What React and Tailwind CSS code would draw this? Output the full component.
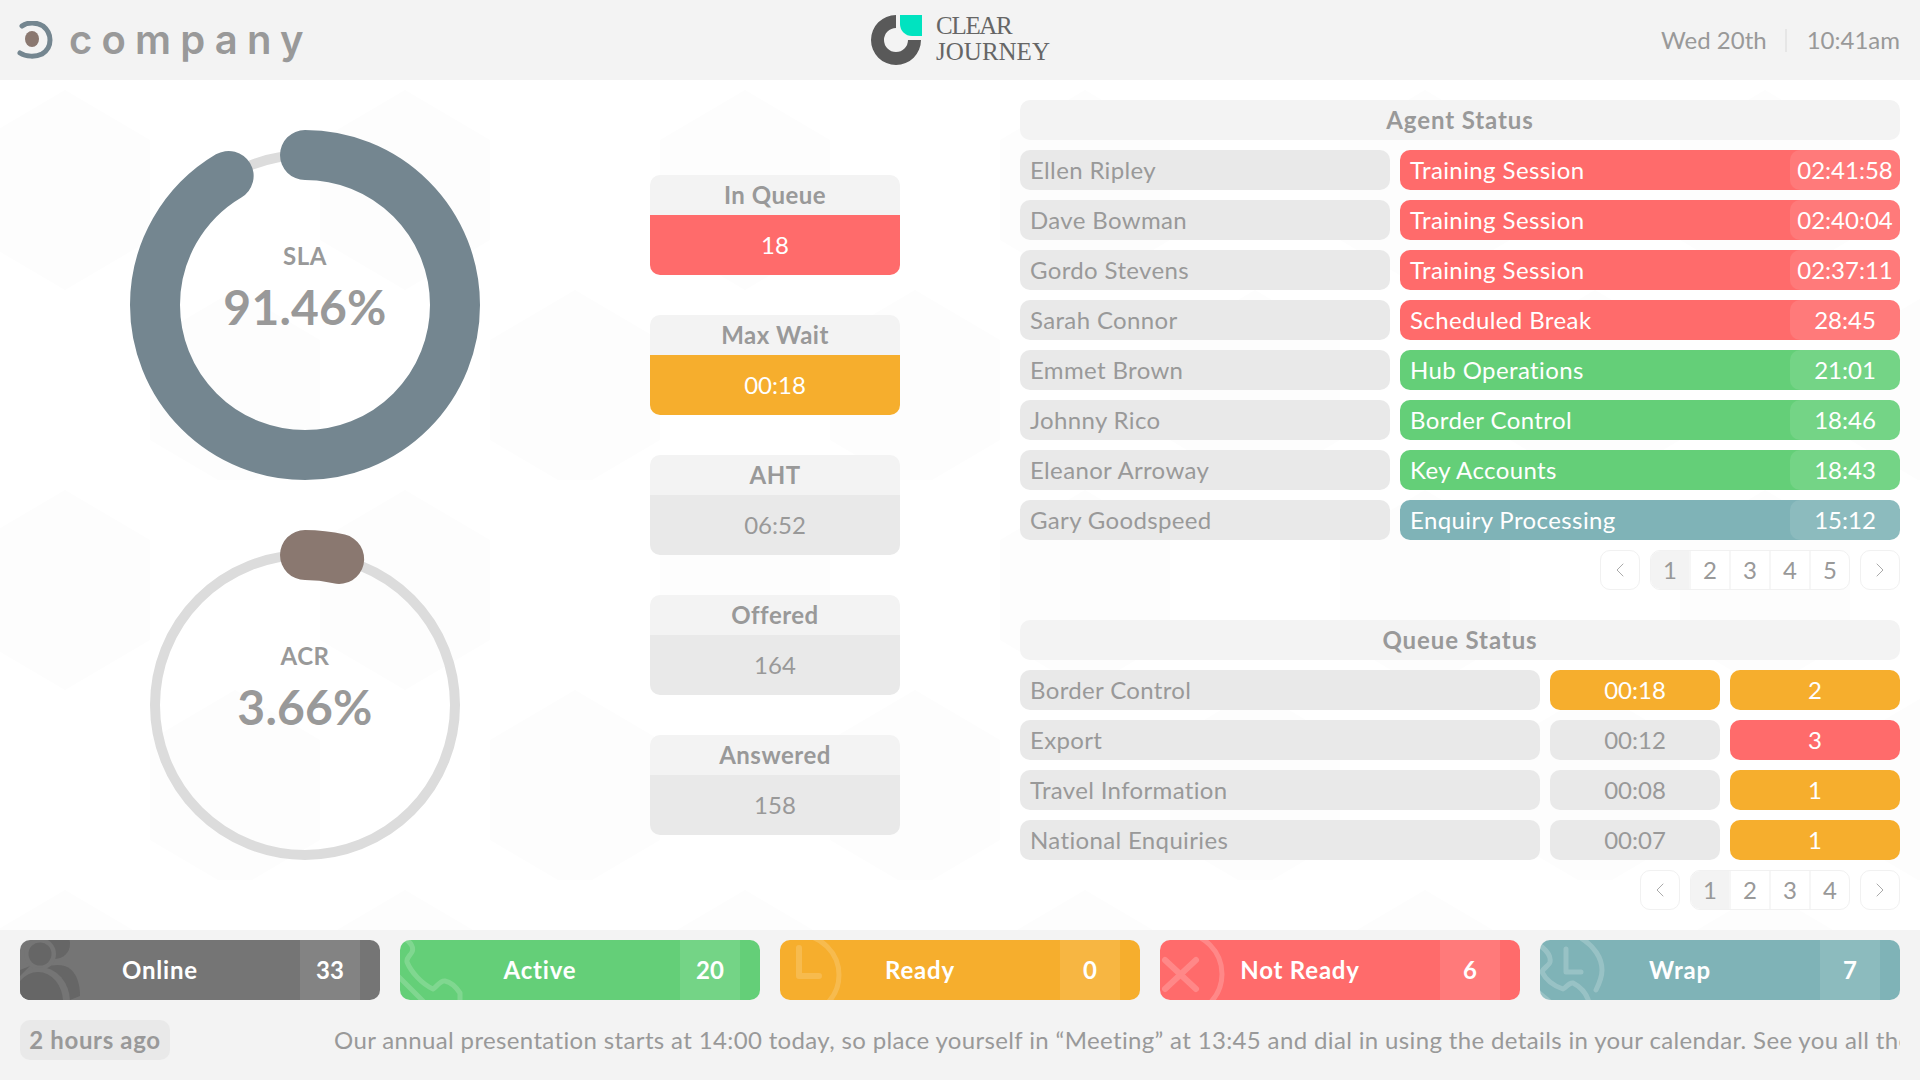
import React from "react";
import { ChevronLeft, ChevronRight } from "lucide-react";

const FONT = "font-['Lato','Noto_Sans',sans-serif]";

const agents = [
  ["Ellen Ripley", "Training Session", "02:41:58", "red"],
  ["Dave Bowman", "Training Session", "02:40:04", "red"],
  ["Gordo Stevens", "Training Session", "02:37:11", "red"],
  ["Sarah Connor", "Scheduled Break", "28:45", "red"],
  ["Emmet Brown", "Hub Operations", "21:01", "green"],
  ["Johnny Rico", "Border Control", "18:46", "green"],
  ["Eleanor Arroway", "Key Accounts", "18:43", "green"],
  ["Gary Goodspeed", "Enquiry Processing", "15:12", "teal"],
];
const bgs = {
  red: "bg-[#ff6b6b] text-white",
  green: "bg-[#64cf78] text-white",
  teal: "bg-[#7fb3b7] text-white",
  amber: "bg-[#f6ae2d] text-white",
  gray: "bg-[#e9e9e9] text-[#999999]",
};
const queues = [
  ["Border Control", "00:18", "amber", "2", "amber"],
  ["Export", "00:12", "gray", "3", "red"],
  ["Travel Information", "00:08", "gray", "1", "amber"],
  ["National Enquiries", "00:07", "gray", "1", "amber"],
];
const kpis = [
  ["In Queue", "18", "red"],
  ["Max Wait", "00:18", "amber"],
  ["AHT", "06:52", "gray"],
  ["Offered", "164", "gray"],
  ["Answered", "158", "gray"],
];

function Donut({ label, value, pct, color }) {
  const c = 2 * Math.PI * 150;
  return (
    <div className="relative w-[360px] h-[360px]">
      <svg width="360" height="360" viewBox="0 0 360 360" className="overflow-visible">
        <circle cx="180" cy="180" r="150" fill="none" stroke="#dcdcdc" strokeWidth="10" />
        <circle
          cx="180"
          cy="180"
          r="150"
          fill="none"
          stroke={color}
          strokeWidth="50"
          strokeLinecap="round"
          strokeDasharray={`${(c * pct) / 100} ${c}`}
          transform="rotate(-90 180 180)"
        />
      </svg>
      <div className="absolute inset-0 flex flex-col items-center justify-center pb-[32px] text-[#999999] font-bold">
        <div className="text-[24px] leading-[30px] mb-[6px] tracking-[0.5px]">{label}</div>
        <div className="text-[48px] leading-[60px] tracking-[0.2px]">{value}</div>
      </div>
    </div>
  );
}

function Pager({ pages }) {
  const box = "w-[40px] h-[40px] flex items-center justify-center";
  return (
    <div className="flex justify-end gap-[10px] text-[24px] text-[#999999]">
      <div className={`${box} border border-[#f1f1f1] rounded-[10px] bg-white`}>
        <ChevronLeft size={24} strokeWidth={1} color="#aaaaaa" />
      </div>
      <div className={`flex h-[40px] border border-[#f1f1f1] rounded-[10px] overflow-hidden bg-white ${pages === 5 ? "w-[200px]" : "w-[160px]"}`}>
        {Array.from({ length: pages }, (_, i) => (
          <div
            key={i}
            className={`flex-1 flex items-center justify-center border-r-2 border-[#f6f6f6] last:border-r-0 ${i === 0 ? "bg-[#f3f3f3]" : ""}`}
          >
            {i + 1}
          </div>
        ))}
      </div>
      <div className={`${box} border border-[#f1f1f1] rounded-[10px] bg-white`}>
        <ChevronRight size={24} strokeWidth={1} color="#aaaaaa" />
      </div>
    </div>
  );
}

const Head = ({ children }) => (
  <div className="h-[40px] rounded-[10px] bg-[#f3f3f3] flex items-center justify-center text-[24px] font-bold tracking-[0.9px] text-[#999999]">
    {children}
  </div>
);

const IconOnline = () => (
  <svg width="70" height="60" viewBox="0 0 70 60" className="absolute left-0 top-0">
    <circle cx="35" cy="4" r="15" fill="#666666" />
    <path d="M8 60 C8 36 20 25 38 25 C54 25 60 40 60 56 L55 58 L50 60 Z" fill="#666666" />
    <circle cx="20" cy="14" r="16" fill="#757575" />
    <circle cx="20" cy="14" r="11.5" fill="#666666" />
    <ellipse cx="20" cy="62" rx="30" ry="35" fill="#757575" />
    <ellipse cx="18" cy="62" rx="25" ry="30" fill="#666666" />
    <path d="M0 30 L10 26 L0 36 Z" fill="#666666" />
  </svg>
);
const IconActive = () => (
  <svg width="70" height="60" viewBox="0 0 70 60" fill="none" stroke="#ffffff" strokeOpacity="0.18" strokeWidth="5" strokeLinecap="round" strokeLinejoin="round" className="absolute left-0 top-0">
    <path d="M5 -1 C11 2 14 8 12 12 C10 16 6 18 7 22 C11 32 22 44 33 49 C37 47 40 40 45 41 C50 42 56 47 60 53 L60 62" />
    <path d="M-2 36 L24 62" />
  </svg>
);
const IconReady = () => (
  <svg width="70" height="60" viewBox="0 0 70 60" fill="none" stroke="#ffffff" strokeOpacity="0.16" strokeLinecap="round" strokeLinejoin="round" className="absolute left-0 top-0">
    <path d="M19 8 V36 H39" strokeWidth="6" />
    <circle cx="19" cy="35" r="40" strokeWidth="5" />
  </svg>
);
const IconNotReady = () => (
  <svg width="70" height="60" viewBox="0 0 70 60" fill="none" stroke="#ffffff" strokeOpacity="0.2" strokeLinecap="round" className="absolute left-0 top-0">
    <path d="M5 20 L36 49 M36 20 L5 49" strokeWidth="6" />
    <circle cx="21" cy="34" r="41" strokeWidth="5" />
  </svg>
);
const IconWrap = () => (
  <svg width="70" height="60" viewBox="0 0 70 60" fill="none" stroke="#ffffff" strokeOpacity="0.2" strokeLinecap="round" strokeLinejoin="round" className="absolute left-0 top-0">
    <path d="M26 9 V32 H41" strokeWidth="5" />
    <path d="M41 -2 C54 6 62 18 62 30 C62 38 59 44 56 50" strokeWidth="5" />
    <path d="M2 7 C8 12 11 17 10 22 C9 26 3 28 2 32 C6 40 14 46 23 49 C26 48 29 42 33 43 C39 46 46 52 49 62" strokeWidth="5" />
    <path d="M-2 52 L10 62" strokeWidth="5" />
  </svg>
);

const stats = [
  ["Online", "33", "bg-[#757575]", IconOnline],
  ["Active", "20", "bg-[#64cf78]", IconActive],
  ["Ready", "0", "bg-[#f6ae2d]", IconReady],
  ["Not Ready", "6", "bg-[#ff6b6b]", IconNotReady],
  ["Wrap", "7", "bg-[#7fb3b7]", IconWrap],
];

export default function App() {
  return (
    <div className={`${FONT} relative w-[1920px] h-[1080px] overflow-hidden flex flex-col bg-white text-[24px]`}>
      <svg className="absolute inset-0" width="1920" height="1080">
        <defs>
          <pattern id="hex" width="340" height="400" patternUnits="userSpaceOnUse" x="-20" y="80">
            <path d="M0 60 L85 10 L170 60 L170 160 L85 210 L0 160 Z" fill="#fdfdfd" />
            <path d="M170 260 L255 210 L340 260 L340 360 L255 410 L170 360 Z" fill="#fdfdfd" />
          </pattern>
        </defs>
        <rect width="1920" height="1080" fill="url(#hex)" />
      </svg>

      <header className="relative h-[80px] shrink-0 bg-[#f3f3f3] flex items-center justify-between">
        <div className="flex items-center pl-[17px] w-[500px]">
          <svg width="36" height="38" viewBox="0 0 36 38">
            <path d="M5 5 C10 1 20 1 26 5 C31 9 33 14 33 19 C33 25 30 30 25 33 C19 36 9 36 3 32" fill="none" stroke="#748690" strokeWidth="5" strokeLinecap="round" />
            <ellipse cx="15" cy="18" rx="7" ry="8" fill="#8a7870" />
          </svg>
          <span className="ml-[16px] font-['Inter',sans-serif] font-semibold text-[40px] leading-none tracking-[9.2px] text-[#999999]">company</span>
        </div>
        <div className="flex items-center gap-[14px]">
          <svg width="52" height="50" viewBox="0 0 52 50">
            <path d="M26 0 A25 25 0 1 0 51 25 H38 A12 12 0 1 1 26 13 Z" fill="#595959" />
            <path d="M30 0 H52 V21 H42 A12 12 0 0 1 30 9 Z" fill="#00e3c0" />
          </svg>
          <div className="font-['Liberation_Serif',serif] text-[#666666] text-[25px] leading-[26px] mt-[-2px]">
            <div className="tracking-[-1.3px]">CLEAR</div>
            <div className="tracking-[0px]">JOURNEY</div>
          </div>
        </div>
        <div className="w-[500px] flex justify-end items-center pr-[20px] text-[24px] text-[#999999]">
          <span>Wed 20th</span>
          <span className="w-[2px] h-[23px] bg-[#e6e6e6] ml-[18px] mr-[20px]" />
          <span>10:41am</span>
        </div>
      </header>

      <main className="relative flex-1 flex text-[#999999]">
        <section className="w-[610px] flex flex-col items-center pt-[45px] gap-[40px]">
          <Donut label="SLA" value="91.46%" pct={91.46} color="#748690" />
          <Donut label="ACR" value="3.66%" pct={3.66} color="#8a7870" />
        </section>

        <section className="ml-[40px] w-[250px] pt-[95px] flex flex-col gap-[40px]">
          {kpis.map(([t, v, c]) => (
            <div key={t} className="rounded-[10px] overflow-hidden text-center">
              <div className="h-[40px] bg-[#f3f3f3] flex items-center justify-center font-bold tracking-[0.5px]">{t}</div>
              <div className={`h-[60px] flex items-center justify-center ${bgs[c]}`}>{v}</div>
            </div>
          ))}
        </section>

        <section className="ml-[120px] w-[880px] pt-[20px] flex flex-col gap-[10px]">
          <Head>Agent Status</Head>
          {agents.map(([n, s, t, c]) => (
            <div key={n} className="flex gap-[10px] h-[40px]">
              <div className="w-[370px] rounded-[10px] bg-[#e9e9e9] flex items-center px-[10px] tracking-[0.35px]">{n}</div>
              <div className={`flex-1 rounded-[10px] flex items-center justify-between ${bgs[c]}`}>
                <span className="pl-[10px] tracking-[0.4px]">{s}</span>
                <span className="w-[110px] h-full rounded-[10px] bg-white/10 flex items-center justify-center">{t}</span>
              </div>
            </div>
          ))}
          <Pager pages={5} />
          <div className="mt-[20px]">
            <Head>Queue Status</Head>
          </div>
          {queues.map(([n, t, tc, k, kc]) => (
            <div key={n} className="flex gap-[10px] h-[40px]">
              <div className="w-[520px] rounded-[10px] bg-[#e9e9e9] flex items-center px-[10px] tracking-[0.35px]">{n}</div>
              <div className={`w-[170px] rounded-[10px] flex items-center justify-center ${bgs[tc]}`}>{t}</div>
              <div className={`flex-1 rounded-[10px] flex items-center justify-center ${bgs[kc]}`}>{k}</div>
            </div>
          ))}
          <Pager pages={4} />
        </section>
      </main>

      <footer className="relative h-[150px] shrink-0 bg-[#f3f3f3] px-[20px] pt-[10px]">
        <div className="flex gap-[20px]">
          {stats.map(([l, n, c, Icon]) => (
            <div key={l} className={`relative overflow-hidden w-[360px] h-[60px] rounded-[10px] flex text-white font-bold ${c}`}>
              <Icon />
              <div className="relative w-[280px] flex items-center justify-center tracking-[0.8px]">{l}</div>
              <div className="relative w-[60px] bg-white/10 flex items-center justify-center">{n}</div>
            </div>
          ))}
        </div>
        <div className="flex mt-[20px] h-[40px] items-center">
          <div className="w-[150px] h-[40px] shrink-0 rounded-[10px] bg-[#e9e9e9] text-[#999999] font-bold tracking-[0.65px] flex items-center justify-center">2 hours ago</div>
          <div className="ml-[164px] flex-1 overflow-hidden whitespace-nowrap text-[#999999] tracking-[0.36px]">
            Our annual presentation starts at 14:00 today, so place yourself in “Meeting” at 13:45 and dial in using the details in your calendar. See you all there!
          </div>
        </div>
      </footer>
    </div>
  );
}
